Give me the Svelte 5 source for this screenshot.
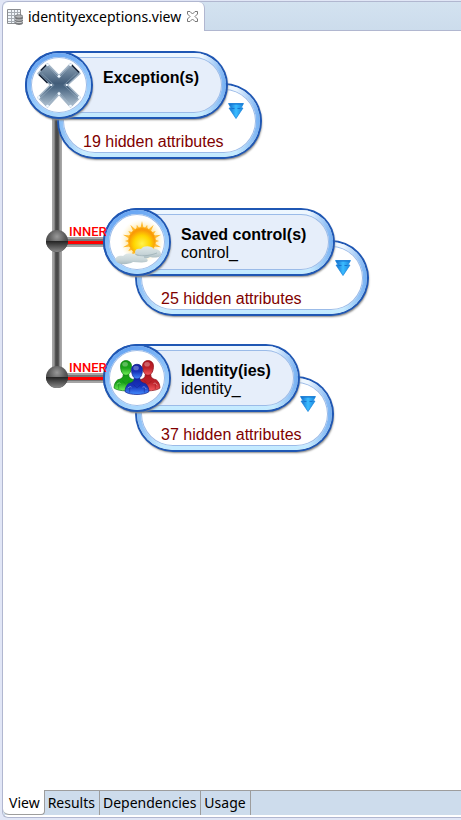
<script>
  const nodes = [
    { id: 'exceptions', title: 'Exception(s)', alias: '', hidden: 19, x: 22, y: 20, icon: 'cross' },
    { id: 'control', title: 'Saved control(s)', alias: 'control_', hidden: 25, x: 100, y: 177, icon: 'sun' },
    { id: 'identity', title: 'Identity(ies)', alias: 'identity_', hidden: 37, x: 100, y: 313, icon: 'people' }
  ];
  const joins = [{ y: 210, label: 'INNER' }, { y: 346, label: 'INNER' }];
  const views = ['View', 'Results', 'Dependencies', 'Usage'];
  const rays = Array.from({ length: 20 }, (_, i) => i * 18);
  const people = [
    { x: 14, y: 11, fill: 'url(#green)', line: '#0b7a10' },
    { x: 38, y: 11, fill: 'url(#red)', line: '#8d1018' },
    { x: 26, y: 15, fill: 'url(#blue)', line: '#10208c' }
  ];
  let active = $state('View');
</script>

<div class="editor">
  <header class="tabs">
    <div class="tab">
      <svg class="file" width="16" height="16" viewBox="0 0 16 16" aria-hidden="true">
        <path d="M.5.5h13v14H.5z" fill="#f1f6fa" stroke="#8b8d90" />
        <path d="M1 3.5h12M1 6.5h12M1 9.5h12M1 12.5h12M4.500 1v13M7.500 1v13M10.500 1v13" stroke="#a5abb2" fill="none" />
        <path d="M8 7.500v6.500c0 2.500 8 2.500 8 0V7.500z" fill="#77797c" />
        <path d="M8 10c1 1.500 7 1.500 8 0M8 12.500c1 1.500 7 1.500 8 0" stroke="#d0d2d4" fill="none" />
        <ellipse cx="12" cy="7.500" rx="4" ry="1.700" fill="#b4b6b8" stroke="#66686b" stroke-width=".7" />
      </svg>
      <span>identityexceptions.view</span>
      <button class="close" aria-label="Close">
        <svg width="11" height="11" viewBox="0 0 11 11"><path d="M.5.500h2.500L5.500 3 8 .5h2.500V3L8 5.500 10.500 8v2.500H8L5.500 8 3 10.500H.5V8L3 5.500.5 3z" fill="#fff" stroke="#777" /></svg>
      </button>
    </div>
  </header>

  <main class="canvas">
    <svg class="links" width="140" height="420" aria-hidden="true">
      <defs>
        <linearGradient id="pipeV"><stop offset="0" stop-color="#aaa" /><stop offset=".2" stop-color="#999" /><stop offset=".35" stop-color="#555" /><stop offset=".5" stop-color="#444" /><stop offset=".65" stop-color="#555" /><stop offset=".8" stop-color="#999" /><stop offset="1" stop-color="#aaa" /></linearGradient>
        <radialGradient id="knob" cy=".3" r=".75"><stop offset="0" stop-color="#999" /><stop offset=".5" stop-color="#5a5a5a" /><stop offset="1" stop-color="#333" /></radialGradient>
        <linearGradient id="knobLow" x2="0" y2="1"><stop offset="0" stop-color="#222" /><stop offset="1" stop-color="#8a8a8a" /></linearGradient>
        <linearGradient id="arrow"><stop offset="0" stop-color="#1267c8" /><stop offset=".5" stop-color="#3bbcff" /><stop offset="1" stop-color="#1784dd" /></linearGradient>
      </defs>
      <rect x="49" y="80" width="10" height="267" fill="url(#pipeV)" />
      {#each joins as join}
        <rect x="54" y={join.y - 4} width="56" height="10" fill="#a4a4a4" />
        <rect x="54" y={join.y - 2} width="56" height="6" fill="#777" />
        <rect x="54" y={join.y} width="56" height="3" fill="#f00" />
        <circle cx="54" cy={join.y} r="11" fill="url(#knob)" />
        <path d="M43 {join.y}h22a11 11 0 0 1-22 0z" fill="url(#knobLow)" />
      {/each}
    </svg>

    {#each nodes as node (node.id)}
      <section class="node" style:left="{node.x}px" style:top="{node.y}px">
        <div class="head shell">
          <div class="badge shell">
            {#if node.icon === 'cross'}
              <svg width="48" height="48" viewBox="0 0 48 50" aria-hidden="true">
                <defs><linearGradient id="steel" x2="0" y2="1"><stop offset="0" stop-color="#8ba0b4" /><stop offset=".45" stop-color="#425d79" /><stop offset=".55" stop-color="#4b6783" /><stop offset="1" stop-color="#b4c6d5" /></linearGradient></defs>
                <path d="M12 3 24 15 36 3l10 10-13 12 13 13-10 10-12-13-12 13L2 38l13-13L2 13z" fill="url(#steel)" stroke="#a3b5c6" stroke-width="1.500" stroke-linejoin="round" />
                <path d="m3 14 9 9M5 10l6-6M37 4l8 8" stroke="#101c30" stroke-width="1.500" fill="none" />
                <path d="m13 6 11 12L35 6M5 38l14-13L6 13M43 38 29 25l13-12M13 45l11-13 11 13" fill="none" stroke="#c7d7e4" stroke-width=".8" opacity=".4" />
                <g fill="#eef7ff"><circle cx="12" cy="4" r="1.500" /><circle cx="36" cy="4" r="1.500" /><circle cx="24" cy="16" r="1.500" /><circle cx="16" cy="25" r="1.200" /><circle cx="32" cy="25" r="1.200" /><circle cx="24" cy="34" r="1.500" /><circle cx="3" cy="38" r="1.500" /><circle cx="45" cy="38" r="1.500" /><circle cx="12" cy="47" r="1.500" /><circle cx="36" cy="47" r="1.500" /></g>
              </svg>
            {:else if node.icon === 'sun'}
              <svg width="52" height="48" viewBox="0 0 52 48" aria-hidden="true">
                <defs>
                  <radialGradient id="sun" cy=".6"><stop offset="0" stop-color="#fff34d" /><stop offset=".6" stop-color="#ffd500" /><stop offset="1" stop-color="#f99a08" /></radialGradient>
                  <radialGradient id="glow"><stop offset=".5" stop-color="#ffdc78" /><stop offset="1" stop-color="#fff3cf" stop-opacity="0" /></radialGradient>
                  <linearGradient id="cloud" x2="0" y2="1"><stop offset="0" stop-color="#dfe8e8" /><stop offset=".6" stop-color="#c8d5d8" /><stop offset="1" stop-color="#a9bbc1" /></linearGradient>
                </defs>
                <circle cx="31" cy="23" r="22" fill="url(#glow)" />
                {#each rays as angle, i}
                  <path d={i % 2 ? 'M29.500 10 31 6l1.500 4z' : 'M29.500 10 31 3l1.500 7z'} fill="#ffb92e" transform="rotate({angle} 31 23)" />
                {/each}
                <circle cx="31" cy="23" r="13.500" fill="url(#sun)" stroke="#ffaf16" stroke-width=".8" />
                <path d="M24 34c0-3 3-4 6-3 3-4 11-3 13 0 4 0 7 2 7 5 0 4-6 4-11 3-5 3-14 2-15-5z" fill="url(#cloud)" />
                <path d="M5 43c-2-3 2-6 7-5 4-4 12-3 14 0 5-1 8 0 7 2 4 0 5 3 2 4-4 1-9 0-13 0-5 3-15 3-17-1z" fill="url(#cloud)" />
                <path d="M24 36c5 3 14 2 22-1" fill="none" stroke="#8fa5ac" opacity=".6" />
              </svg>
            {:else}
              <svg width="48" height="44" viewBox="0 0 52 48" aria-hidden="true">
                <defs>
                  <linearGradient id="green" x2="0" y2="1"><stop offset="0" stop-color="#139b12" /><stop offset=".5" stop-color="#1aa31a" /><stop offset="1" stop-color="#75f45c" /></linearGradient>
                  <linearGradient id="red" x2="0" y2="1"><stop offset="0" stop-color="#b31620" /><stop offset=".5" stop-color="#bd222a" /><stop offset="1" stop-color="#f4595e" /></linearGradient>
                  <linearGradient id="blue" x2="0" y2="1"><stop offset="0" stop-color="#1324a4" /><stop offset=".5" stop-color="#1733ba" /><stop offset="1" stop-color="#438dff" /></linearGradient>
                </defs>
                {#each people as p}
                  <g transform="translate({p.x} {p.y})" fill={p.fill} stroke={p.line} stroke-width=".8">
                    <path d="M-3 9c0 4-2 5-6 6-3 2-4 6-4 9 5 4 21 4 26 0 0-3-1-7-4-9-4-1-6-2-6-6z" />
                    <path d="M-4 16 0 20l4-4M-8 20v5M8 20v5" fill="none" opacity=".6" />
                    <path d="M-6 0c0-8 12-8 12 0 0 5-2 10-6 10S-6 5-6 0z" />
                    <ellipse cx="-1" cy="-2" rx="3" ry="2.500" fill="#fff" stroke="none" opacity=".3" />
                    <path d="M-10 20c2-2 3-2 4-1M6 19c2-1 3 0 4 2" fill="none" stroke="#fff" opacity=".5" />
                  </g>
                {/each}
              </svg>
            {/if}
          </div>
          <div class="caption">
            <h2>{node.title}</h2>
            <p>{node.alias}</p>
          </div>
        </div>
        <div class="body shell">
          <p>{node.hidden} hidden attributes</p>
          <button class="expand" aria-label="Show hidden attributes">
            <svg width="16" height="16" viewBox="0 0 16 16">
              <path d="M.5.500h15L13 5h2L8 15.500 1 5h2z" fill="url(#arrow)" stroke="#1c86dd" stroke-width=".8" />
              <path d="M3.500 5.500h3M9.500 5.500h3M1 1h14" stroke="#1774cf" fill="none" />
            </svg>
          </button>
        </div>
      </section>
    {/each}

    {#each joins as join}
      <span class="join" style:top="{join.y - 17}px">{join.label}</span>
    {/each}
  </main>

  <nav class="views">
    {#each views as view}
      <button class:active={active === view} onclick={() => (active = view)}>{view}</button>
    {/each}
  </nav>
</div>

<style>
  :global(body) { background: #e1e6f6; }
  .editor {
    box-sizing: border-box;
    min-height: calc(100vh - 3px);
    margin: 1px 0 2px 2px;
    display: flex;
    flex-direction: column;
    background: #fff;
    border: 1px solid #b1b7d0;
    border-right: 0;
    border-radius: 6px 0 0 6px;
    overflow: hidden;
    font-family: "Noto Sans", "Open Sans", sans-serif;
    font-size: 14px;
    color: #000;
  }
  button { font: inherit; color: inherit; background: none; border: 0; padding: 0; }
  h2, p { margin: 0; }
  .tabs {
    display: flex;
    height: 28px;
    background: linear-gradient(#d3e2f0, #ccdcec);
    border-bottom: 1px solid #b1b7d0;
  }
  .tab {
    display: flex;
    align-items: center;
    gap: 5px;
    height: 29px;
    padding: 0 6px 0 4px;
    background: #fff;
    border-right: 1px solid #b1b7d0;
    border-radius: 6px 6px 0 0;
  }
  .tab span { line-height: 20px; }
  .close { display: flex; margin-left: 1px; }
  .canvas {
    position: relative;
    flex: 1;
    min-height: 440px;
    font-family: "Liberation Sans", Arial, sans-serif;
    font-size: 16px;
    line-height: 18px;
  }
  .links { position: absolute; left: 0; top: 0; }
  .node { position: absolute; white-space: nowrap; }
  .shell {
    --fill: #fff;
    box-sizing: border-box;
    border: 4px solid transparent;
    border-radius: 38px;
    background:
      linear-gradient(var(--fill), var(--fill)) padding-box,
      linear-gradient(90deg, #82baf6, transparent 24px, transparent calc(100% - 24px), #72aef2) border-box,
      linear-gradient(#eef7ff, #e4f2ff 50%, #c2eaff) border-box;
    box-shadow: inset 0 0 0 1px #9bbbe8, 0 0 0 2px #1f57b4, 1px 2px 2px 1px #888;
  }
  .head {
    --fill: #e6eefa;
    position: relative;
    z-index: 1;
    display: flex;
    height: 64px;
    margin: 2px 36px 0 2px;
  }
  .badge {
    display: flex;
    align-items: center;
    justify-content: center;
    width: 64px;
    height: 64px;
    margin: -4px 0 0 -4px;
    background: linear-gradient(#fff, #fff) padding-box, linear-gradient(160deg, #5c9cf0, #8fc4fb 50%, #b8e2ff) border-box;
  }
  .badge svg { flex: none; }
  .caption { padding: 12px 23px 0 12px; }
  .caption h2 { font-size: 16px; line-height: 18px; }
  .body {
    position: relative;
    height: 72px;
    margin: -32px 2px 0 34px;
    padding: 44px 0 0 20px;
  }
  .body p { width: 0; color: #800000; }
  .expand { position: absolute; right: 12px; top: 14px; display: flex; }
  .join {
    position: absolute;
    left: 66px;
    z-index: 2;
    font-family: Roboto, Arial, sans-serif;
    font-size: 13px;
    font-weight: 500;
    line-height: 16px;
    color: #f00;
  }
  .views {
    display: flex;
    height: 24px;
    margin-bottom: 2px;
    background: #cddcec;
    border-top: 1px solid #9d9d9d;
  }
  .views button {
    height: 24px;
    padding: 0 4px 0 3px;
    line-height: 22px;
    border-right: 1px solid #9d9d9d;
  }
  .views .active {
    height: 25px;
    margin-top: -1px;
    padding: 1px 4px 0 6px;
    background: #fff;
    border-bottom: 1px solid #9d9d9d;
    border-radius: 0 0 4px 6px;
  }
</style>
